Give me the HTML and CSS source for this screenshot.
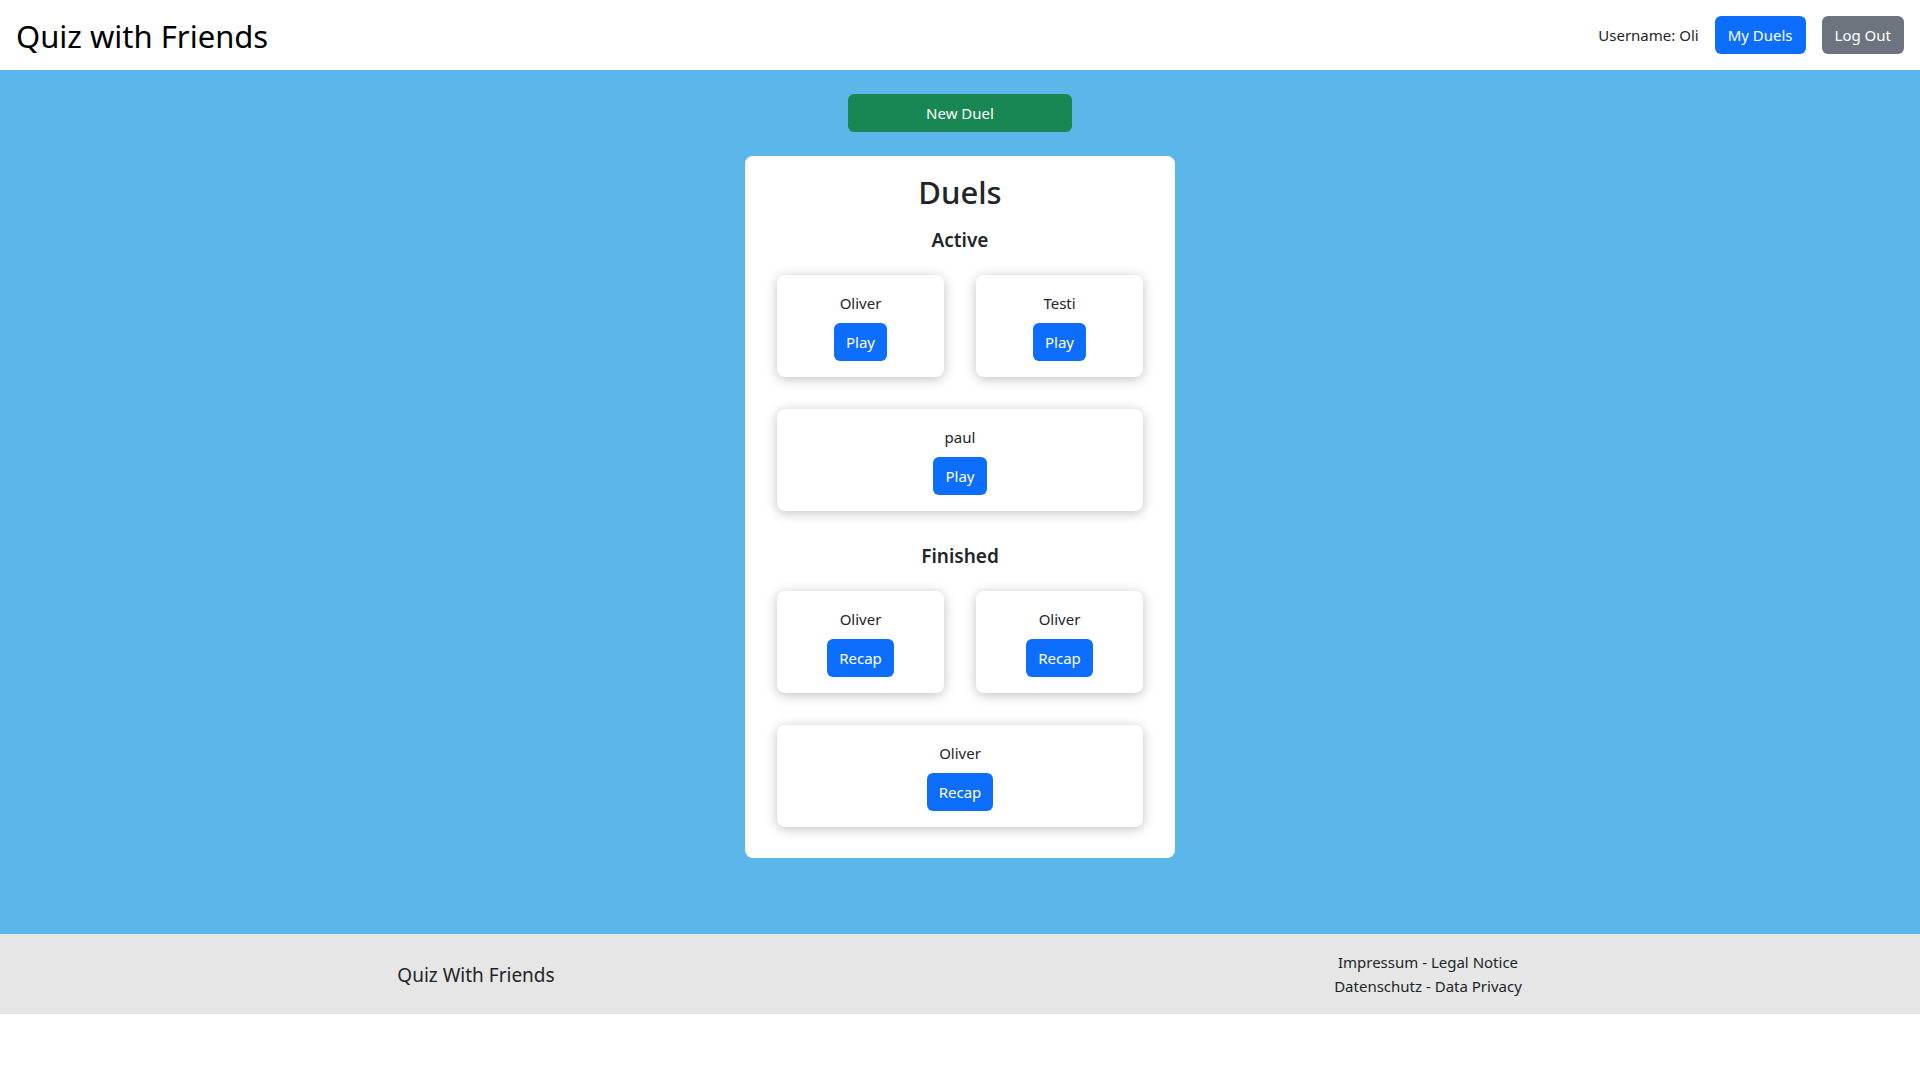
FILE: index.html
```html
<!DOCTYPE html>
<html lang="en">
<head>
<meta charset="utf-8">
<title>Quiz with Friends</title>
<link rel="stylesheet" href="styles.css">
</head>
<body>
<header class="topbar">
  <div class="brand">Quiz with Friends</div>
  <nav class="user-nav">
    <span class="username">Username: Oli</span>
    <button class="btn btn-primary">My Duels</button>
    <button class="btn btn-secondary">Log Out</button>
  </nav>
</header>
<main class="main">
  <button class="btn btn-success new-duel">New Duel</button>
  <section class="duels-card">
    <h2 class="duels-title">Duels</h2>
    <h5 class="section-title">Active</h5>
    <div class="duel-grid">
      <div class="duel"><p class="duel-name">Oliver</p><button class="btn btn-primary">Play</button></div>
      <div class="duel"><p class="duel-name">Testi</p><button class="btn btn-primary">Play</button></div>
      <div class="duel wide"><p class="duel-name">paul</p><button class="btn btn-primary">Play</button></div>
    </div>
    <h5 class="section-title finished">Finished</h5>
    <div class="duel-grid">
      <div class="duel"><p class="duel-name">Oliver</p><button class="btn btn-primary">Recap</button></div>
      <div class="duel"><p class="duel-name">Oliver</p><button class="btn btn-primary">Recap</button></div>
      <div class="duel wide"><p class="duel-name">Oliver</p><button class="btn btn-primary">Recap</button></div>
    </div>
  </section>
</main>
<footer class="footer">
  <div class="footer-col left">Quiz With Friends</div>
  <div class="footer-col right">
    <div>Impressum - Legal Notice</div>
    <div>Datenschutz - Data Privacy</div>
  </div>
</footer>
</body>
</html>
```
FILE: styles.css
```css
* { box-sizing: border-box; }
html, body { margin: 0; padding: 0; }
body {
  font-family: "Noto Sans", "Open Sans", sans-serif;
  font-size: 16px;
  line-height: 24px;
  color: #212529;
  background: #fff;
}
.topbar {
  height: 70px;
  display: flex;
  align-items: center;
  justify-content: space-between;
  padding: 0 16px;
  background: #fff;
}
.brand {
  font-size: 31px;
  line-height: 38px;
  color: #000;
  padding-top: 2px;
}
.user-nav {
  display: flex;
  align-items: center;
  gap: 16px;
}
.username { font-size: 15px; }
.btn {
  font-family: inherit;
  font-size: 15px;
  line-height: 24px;
  padding: 7px 12px;
  border: 0;
  border-radius: 6px;
  color: #fff;
  cursor: pointer;
  display: inline-block;
}
.user-nav .btn { padding: 7px 13px; }
.btn-primary { background: #0d6efd; }
.btn-secondary { background: #6c757d; }
.btn-success { background: #198754; }
.main {
  background: #5bb7ea;
  display: flex;
  flex-direction: column;
  align-items: center;
  padding: 24px 0 76px;
}
.new-duel {
  width: 224px;
  height: 38px;
  padding: 0;
  font-size: 15px;
}
.duels-card {
  margin-top: 24px;
  width: 430px;
  background: #fff;
  border-radius: 8px;
  padding: 17px 32px 31px;
  text-align: center;
}
.duels-title {
  margin: 0 0 17px;
  font-size: 31px;
  line-height: 38px;
  font-weight: 500;
}
.section-title {
  margin: 0 0 23px;
  font-size: 19px;
  line-height: 24px;
  font-weight: 600;
}
.section-title.finished { margin-top: 33px; }
.duel-grid {
  display: grid;
  grid-template-columns: 1fr 1fr;
  gap: 32px;
}
.duel {
  background: #fff;
  border-radius: 8px;
  box-shadow: 0 2px 12px rgba(0, 0, 0, 0.25);
  padding: 16px;
  height: 102px;
  display: flex;
  flex-direction: column;
  align-items: center;
}
.duel.wide { grid-column: 1 / 3; }
.duel-name {
  margin: 0 0 8px;
  font-size: 15px;
  line-height: 24px;
}
.footer {
  height: 80px;
  background: #e6e6e6;
  display: grid;
  grid-template-columns: 1fr 1fr;
  align-items: center;
}
.footer-col { text-align: center; }
.footer-col.left { font-size: 19px; padding-right: 8px; padding-top: 1px; }
.footer-col.right { font-size: 15px; padding-right: 24px; margin-top: -1px; }
```
